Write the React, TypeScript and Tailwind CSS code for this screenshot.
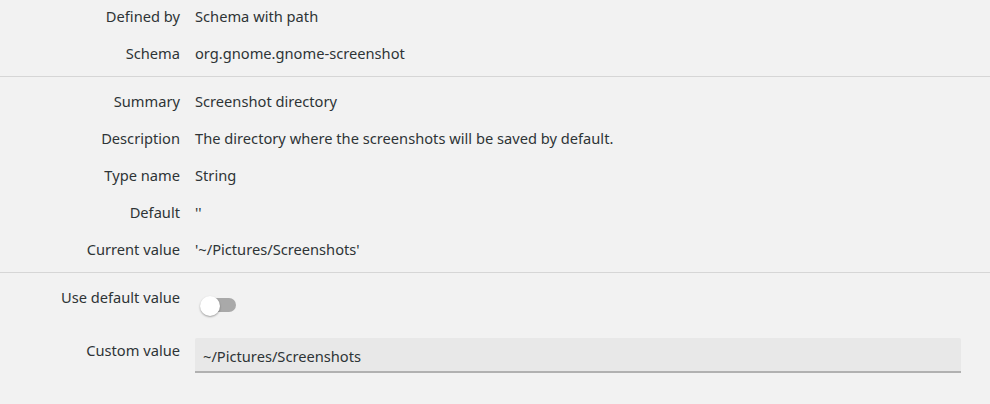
const rows1 = [
  { label: "Defined by", value: "Schema with path" },
  { label: "Schema", value: "org.gnome.gnome-screenshot" },
];

const rows2 = [
  { label: "Summary", value: "Screenshot directory" },
  { label: "Description", value: "The directory where the screenshots will be saved by default." },
  { label: "Type name", value: "String" },
  { label: "Default", value: "''" },
  { label: "Current value", value: "'~/Pictures/Screenshots'" },
];

const Row = ({ label, value }: { label: string; value: string }) => (
  <div className="grid grid-cols-[180px_1fr] gap-x-[15px] py-[6px] leading-5">
    <div className="text-right">{label}</div>
    <div>{value}</div>
  </div>
);

export default function App() {
  return (
    <div
      className="w-[990px] h-[404px] bg-[#f2f2f2] text-[#2e3436] text-[14.67px] overflow-hidden"
      style={{ fontFamily: '"Noto Sans", "Open Sans", sans-serif' }}
    >
      <div className="flex flex-col gap-[5px]">
        {rows1.map((r) => (
          <Row key={r.label} {...r} />
        ))}
      </div>

      <div className="mt-[7px] h-px bg-[#d6d6d6]" />

      <div className="mt-[8px] flex flex-col gap-[5px]">
        {rows2.map((r) => (
          <Row key={r.label} {...r} />
        ))}
      </div>

      <div className="mt-[7px] h-px bg-[#d6d6d6]" />

      <div className="pt-[14px]">
        {/* Use default value */}
        <div className="grid grid-cols-[180px_1fr] gap-x-[15px] leading-5">
          <div className="text-right">Use default value</div>
          <div className="pt-[9px]">
            <div className="relative w-[41px] h-[20px]">
              <div className="absolute left-[8px] top-[2px] w-[33px] h-[14px] rounded-full bg-[#a9a9a9]" />
              <div className="absolute left-[5px] top-0 w-[20px] h-[20px] rounded-full bg-white shadow-[0_1px_2px_rgba(0,0,0,0.35)]" />
            </div>
          </div>
        </div>

        {/* Custom value */}
        <div className="mt-[22px] grid grid-cols-[180px_1fr] gap-x-[15px] leading-5">
          <div className="text-right pt-[2px]">Custom value</div>
          <div className="pr-[29px]">
            <div className="h-[35px] pt-[8px] px-[8px] bg-[#e8e8e8] border-b-2 border-[#b1b1b1] rounded-t-[2px]">
              ~/Pictures/Screenshots
            </div>
          </div>
        </div>
      </div>
    </div>
  );
}
